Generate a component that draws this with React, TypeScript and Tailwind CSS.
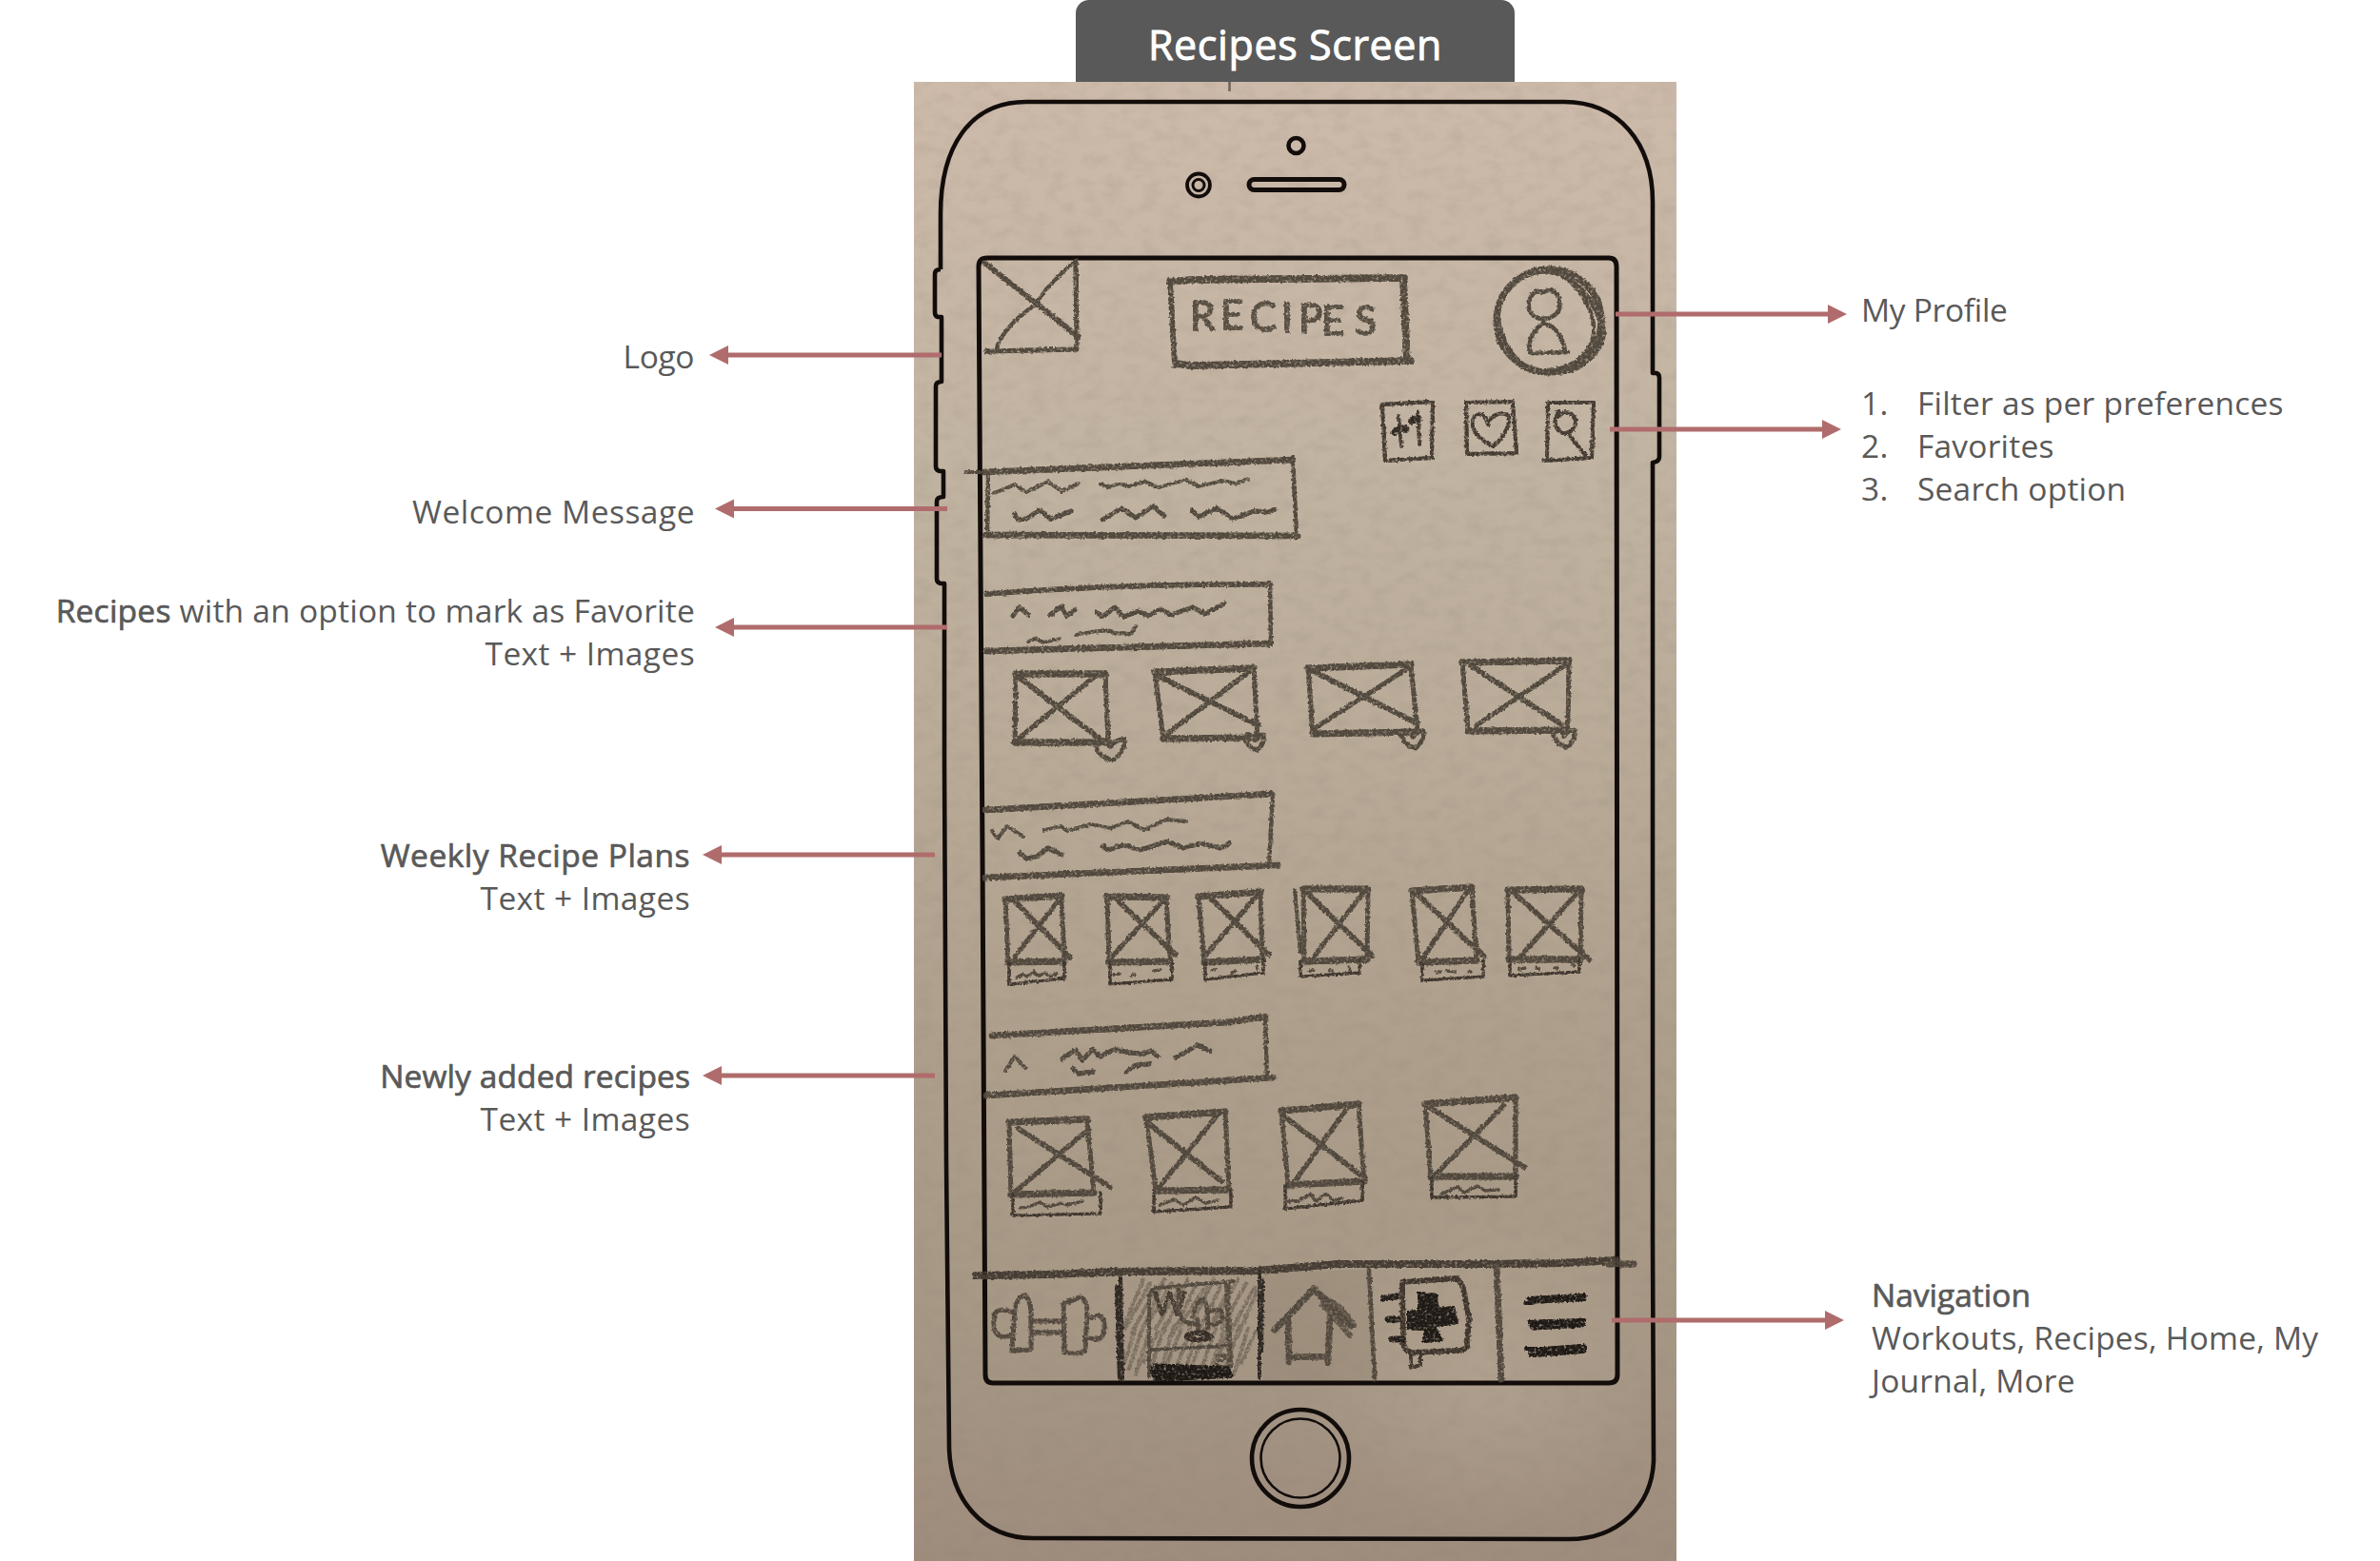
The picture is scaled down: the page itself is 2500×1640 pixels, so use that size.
import { ReactNode } from "react";

type Point = [number, number];

// corners run top-left, top-right, bottom-right, bottom-left, then the two diagonals
type Thumb = { box: number[]; cross: number[]; caption?: number[]; note?: string; heart?: number[] };

const favorites: Thumb[] = [
  { box: [1067, 708, 1161, 708, 1164, 780, 1066, 780], cross: [1071, 712, 1159, 779, 1152, 709, 1071, 775], heart: [1166, 776, 17, 25] },
  { box: [1213, 706, 1317, 702, 1321, 775, 1222, 776], cross: [1218, 711, 1322, 762, 1312, 706, 1227, 770], heart: [1318, 771, 11, 19] },
  { box: [1374, 702, 1482, 698, 1489, 769, 1379, 771], cross: [1377, 704, 1489, 760, 1479, 702, 1381, 765], heart: [1484, 767, 13, 21] },
  { box: [1536, 696, 1648, 694, 1647, 767, 1542, 768], cross: [1546, 700, 1640, 761, 1644, 699, 1551, 762], heart: [1643, 766, 13, 21] },
];

const weekly: Thumb[] = [
  { box: [1056, 945, 1115, 941, 1118, 1010, 1059, 1011], cross: [1067, 948, 1124, 1006, 1112, 946, 1066, 1005], caption: [1060, 1034, 1118, 1028], note: "M1068 1027L1074 1024L1079 1026L1086 1021L1091 1026L1097 1022L1103 1026L1110 1023" },
  { box: [1163, 942, 1225, 943, 1229, 1010, 1165, 1011], cross: [1175, 947, 1235, 1003, 1222, 946, 1167, 1006], caption: [1166, 1034, 1231, 1029], note: "M1170 1024L1176 1023M1189 1025L1192 1024M1212 1020L1218 1019" },
  { box: [1259, 942, 1324, 937, 1326, 1008, 1265, 1011], cross: [1271, 943, 1333, 1003, 1320, 941, 1266, 1004], caption: [1266, 1029, 1327, 1022], note: "M1273 1020L1276 1019M1294 1022L1297 1020M1320 1016L1321 1018" },
  { box: [1369, 934, 1437, 934, 1436, 1008, 1370, 1010], cross: [1372, 937, 1441, 1004, 1432, 938, 1380, 1005], caption: [1366, 1026, 1428, 1022], note: "M1376 1020L1379 1019M1397 1019L1400 1020M1417 1016L1418 1019" },
  { box: [1483, 936, 1546, 932, 1551, 1009, 1490, 1011], cross: [1487, 938, 1559, 1005, 1541, 937, 1493, 1009], caption: [1494, 1030, 1558, 1026], note: "M1509 1021L1513 1021M1520 1020L1528 1021M1543 1021L1545 1021" },
  { box: [1584, 935, 1661, 934, 1660, 1008, 1585, 1008], cross: [1590, 938, 1669, 1008, 1656, 939, 1596, 1006], caption: [1586, 1025, 1659, 1021], note: "M1596 1018L1602 1017M1614 1017L1617 1018M1633 1017L1636 1017M1652 1014L1654 1015" },
];

const newest: Thumb[] = [
  { box: [1060, 1179, 1142, 1176, 1149, 1253, 1062, 1255], cross: [1070, 1186, 1166, 1247, 1143, 1187, 1065, 1253], caption: [1064, 1277, 1156, 1275], note: "M1072 1269L1081 1268L1092 1263L1100 1268L1115 1264L1121 1266L1137 1262" },
  { box: [1204, 1174, 1287, 1168, 1291, 1250, 1214, 1251], cross: [1205, 1179, 1283, 1241, 1280, 1170, 1217, 1248], caption: [1212, 1273, 1293, 1268], note: "M1219 1266L1233 1260L1243 1266L1256 1258L1266 1264L1279 1261" },
  { box: [1346, 1167, 1427, 1160, 1433, 1241, 1353, 1245], cross: [1349, 1173, 1434, 1238, 1416, 1163, 1358, 1244], caption: [1350, 1270, 1431, 1261], note: "M1353 1262L1363 1262L1377 1255L1382 1262L1393 1254L1400 1261L1409 1259" },
  { box: [1497, 1160, 1592, 1153, 1592, 1236, 1503, 1236], cross: [1501, 1163, 1601, 1226, 1579, 1162, 1507, 1235], caption: [1504, 1258, 1592, 1257], note: "M1513 1255L1531 1247L1538 1253L1552 1246L1560 1251L1574 1250" },
];

const squiggles: Point[][] = [
  [[1044, 518], [1052, 515], [1066, 509], [1078, 517], [1101, 506], [1115, 516], [1133, 508]],
  [[1156, 508], [1164, 512], [1175, 508], [1185, 511], [1203, 506], [1217, 512], [1246, 504], [1259, 511], [1285, 505], [1298, 508], [1311, 503]],
  [[1080, 674], [1087, 671], [1096, 675], [1113, 671]],
  [[1130, 667], [1146, 664], [1164, 662], [1170, 665], [1188, 666], [1193, 658]],
  [[1042, 873], [1048, 881], [1058, 868], [1075, 879]],
  [[1097, 872], [1115, 868], [1120, 873], [1146, 866], [1167, 870], [1185, 863], [1202, 872], [1225, 861], [1246, 863]],
  [[1056, 1125], [1066, 1110], [1077, 1122]],
];

const darkSquiggles: Point[][] = [
  [[1066, 540], [1069, 546], [1078, 545], [1092, 536], [1104, 545], [1125, 537]],
  [[1158, 546], [1178, 534], [1193, 544], [1211, 532], [1223, 542]],
  [[1252, 536], [1259, 543], [1278, 534], [1295, 545], [1318, 537], [1332, 538], [1339, 535]],
  [[1064, 647], [1071, 638], [1080, 646]],
  [[1103, 646], [1115, 637], [1120, 647], [1129, 641]],
  [[1152, 643], [1158, 648], [1171, 638], [1180, 648], [1196, 642], [1206, 647], [1219, 640], [1230, 646], [1253, 638], [1266, 645], [1286, 634]],
  [[1071, 896], [1078, 902], [1089, 900], [1101, 891], [1115, 898]],
  [[1158, 889], [1164, 893], [1180, 888], [1198, 893], [1226, 884], [1243, 891], [1262, 886], [1282, 891], [1291, 886]],
  [[1116, 1112], [1130, 1103], [1137, 1114], [1148, 1102], [1155, 1110], [1172, 1102], [1185, 1106], [1201, 1107], [1209, 1104], [1216, 1110]],
  [[1235, 1111], [1258, 1098], [1271, 1104]],
  [[1127, 1123], [1133, 1128], [1148, 1126]],
  [[1183, 1126], [1194, 1119], [1207, 1118]],
];

const arrows = [
  { tail: 989, head: 745, y: 373 },
  { tail: 995, head: 751, y: 534.5 },
  { tail: 995, head: 751, y: 659 },
  { tail: 982, head: 738, y: 898 },
  { tail: 982, head: 738, y: 1130 },
  { tail: 1697, head: 1940, y: 330 },
  { tail: 1691, head: 1934, y: 451 },
  { tail: 1693, head: 1937, y: 1387 },
];

const hatching = [1189, 1196, 1203, 1211, 1219, 1228, 1236, 1245, 1254, 1263, 1272, 1280, 1288, 1297, 1306, 1314];

function wave(points: Point[]) {
  return points.map(([x, y], i) => `${i ? "L" : "M"}${x} ${y}`).join("");
}

function SketchThumb({ box, cross, caption, note, heart }: Thumb) {
  const [ax, ay, bx, by, cx, cy, dx, dy] = box;
  return (
    <g>
      <path d={`M${ax} ${ay}L${bx} ${by}M${dx} ${dy}L${cx} ${cy}`} strokeWidth="7" />
      <path d={`M${ax} ${ay}L${dx} ${dy}M${bx} ${by}L${cx} ${cy}`} strokeWidth="4.8" />
      <path d={`M${cross[0]} ${cross[1]}L${cross[2]} ${cross[3]}`} strokeWidth="5.5" />
      <path d={`M${cross[4]} ${cross[5]}L${cross[6]} ${cross[7]}`} strokeWidth="5" />
      {caption && <path d={`M${caption[0]} ${dy}L${caption[0]} ${caption[1]}L${caption[2]} ${caption[3]}L${caption[2]} ${cy}`} stroke="#3e352d" strokeWidth="3.2" />}
      {note && <path d={note} strokeWidth="3.2" />}
      {heart && <SketchHeart x={heart[0]} y={heart[1]} half={heart[2]} height={heart[3]} />}
    </g>
  );
}

function SketchHeart({ x, y, half, height }: { x: number; y: number; half: number; height: number }) {
  return (
    <path
      d={`M${x} ${y + height * 0.35}C${x - half * 0.4} ${y - 3} ${x - half} ${y} ${x - half + 2} ${y + height * 0.35}Q${x - half * 0.6} ${y + height * 0.8} ${x + 3} ${y + height - 2}Q${x + half} ${y + height * 0.5} ${x + half - 2} ${y + 1}Q${x + half * 0.4} ${y} ${x} ${y + height * 0.35}`}
      strokeWidth="4.6"
    />
  );
}

function PhoneOutline() {
  return (
    <g fill="none" stroke="#120d0b" strokeWidth="4.6" strokeLinejoin="round">
      <path d="M988 283V225C988 155 1018 107 1078 107H1643C1700 107 1736 150 1736 212V392H1740Q1743 393 1743 397V480Q1743 485 1736 486V1300L1737 1535C1735 1582 1700 1617 1648 1617L1085 1616C1032 1616 998 1575 997 1520L994 1220L992 800V613H988Q984 612 984 608V527Q984 522 991 522V495H987Q983 494 983 490V406Q983 401 989 401V333H985Q982 332 982 328V288Q982 283 988 283" />
      <path d="M1037 271H1690Q1698 271 1698 280L1699 1444Q1699 1453 1690 1453H1043Q1035 1453 1035 1444L1032 900L1028 280Q1028 271 1037 271Z" strokeWidth="5" />
      <circle cx="1361.5" cy="153" r="8" />
      <circle cx="1259" cy="194.5" r="12" strokeWidth="3.8" />
      <circle cx="1259" cy="194.5" r="6" strokeWidth="3" />
      <rect x="1312" y="188.5" width="100" height="11" rx="5.5" strokeWidth="5" />
      <circle cx="1366" cy="1532" r="51" />
      <circle cx="1366" cy="1532" r="41.5" strokeWidth="2.6" />
      <path d="M1291.5 86V96" stroke="#6d6056" strokeWidth="2.5" />
    </g>
  );
}

function HeaderSketch() {
  return (
    <g>
      <path d="M1034 276L1133 354" strokeWidth="5.5" />
      <path d="M1130 274Q1098 301 1088 320Q1056 341 1047 365" strokeWidth="4" />
      <path d="M1130 274L1131 367L1036 369" strokeWidth="5" />
      <path d="M1229 296L1252 294L1475 292M1235 382L1250 384L1482 379" strokeWidth="7.5" />
      <path d="M1229 296L1234 384" strokeWidth="5.5" />
      <path d="M1474 293L1478 380" strokeWidth="7.5" />
      <text
        x="1250 1282 1313 1346 1364 1388 1423"
        y="347 346 348 349 350 352 352"
        fill="#574e42"
        stroke="#574e42"
        strokeWidth="1.4"
        className="font-['Lato',sans-serif] text-[42px]"
      >
        RECIPES
      </text>
      <ellipse cx="1627" cy="337" rx="55" ry="54" strokeWidth="7" />
      <path d="M1600 291C1640 270 1676 310 1685 350C1680 374 1658 392 1634 391" strokeWidth="5" />
      <path d="M1632 284C1663 300 1676 332 1674 350C1670 374 1650 389 1620 389" strokeWidth="4" />
      <path d="M1575 322C1571 349 1590 382 1612 388" strokeWidth="3" />
      <path d="M1622 307C1609 303 1605 315 1606 324C1610 339 1632 338 1638 325C1641 306 1628 302 1622 307Z" strokeWidth="4.4" />
      <path d="M1622 339C1611 345 1606 358 1606 367Q1607 372 1613 371L1647 370M1622 339C1635 344 1642 354 1644 369" strokeWidth="4.4" />
    </g>
  );
}

function ToolbarSketch() {
  return (
    <g stroke="#443b32" strokeWidth="4">
      <path d="M1451 425L1505 422L1504 481L1455 484L1452 425" />
      <path d="M1469 437L1472 469M1489 433L1491 467" strokeWidth="3.6" />
      <path d="M1465 454Q1473 448 1477 451M1483 442Q1488 438 1490 441" strokeWidth="7" stroke="#322a23" />
      <path d="M1540 423L1589 422L1593 476L1541 477Z" />
      <path d="M1563 446C1560 431 1545 432 1547 448C1550 458 1558 464 1569 469C1578 460 1587 449 1585 437C1576 431 1565 437 1563 446" />
      <path d="M1625 480L1626 423L1674 423L1672 481L1621 484" />
      <path d="M1637 432C1630 443 1635 456 1645 455C1658 453 1659 435 1645 433Q1640 433 1636 438M1647 455L1665 478" />
    </g>
  );
}

function SectionHeadings() {
  return (
    <g>
      <path d="M1034 496L1358 483M1036 562L1363 563M1036 684L1335 676M1035 851L1336 834M1035 922L1342 909M1042 1088L1290 1074L1329 1068M1036 1151L1338 1132" strokeWidth="6.5" />
      <path d="M1036 624Q1180 613 1334 614" strokeWidth="5.5" />
      <path d="M1015 496H1060M1038 497L1037 562M1358 480L1362 563M1334 612L1335 678M1337 834L1333 909M1329 1067L1331 1133" strokeWidth="4.2" />
      <g strokeWidth="3.8" opacity="0.85">
        {squiggles.map((points, i) => <path key={i} d={wave(points)} />)}
      </g>
      <g strokeWidth="4.8">
        {darkSquiggles.map((points, i) => <path key={i} d={wave(points)} />)}
      </g>
    </g>
  );
}

function NavSketch() {
  return (
    <g>
      <path d="M1025 1340L1100 1339L1175 1336L1321 1335L1405 1328L1572 1328L1640 1327L1698 1324" strokeWidth="8" stroke="#453c33" />
      <path d="M1690 1328H1716" strokeWidth="7" />
      <path d="M1177 1342L1179 1450M1173 1352L1176 1448" strokeWidth="4" stroke="#2e2823" />
      <path d="M1323 1336L1323 1448M1326 1346L1325 1420" strokeWidth="4" stroke="#2e2823" />
      <path d="M1438 1334L1444 1449" strokeWidth="4.4" />
      <path d="M1572 1330L1577 1449" strokeWidth="6.5" />

      {/* dumbbell */}
      <g strokeWidth="4.8" opacity="0.9">
        <path d="M1064 1379Q1044 1371 1044 1386V1394Q1046 1408 1063 1403" />
        <path d="M1066 1375Q1070 1361 1076 1361Q1082 1364 1083 1378V1418L1063 1419Z" />
        <path d="M1084 1388H1117M1084 1400H1117" />
        <path d="M1117 1370L1134 1363Q1142 1364 1142 1380L1140 1418Q1135 1424 1118 1421Z" />
        <path d="M1143 1385L1154 1382Q1160 1385 1160 1392Q1160 1408 1151 1407L1140 1405" />
      </g>

      {/* recipe book, shaded as the selected tab */}
      <g strokeWidth="4" opacity="0.3">
        {hatching.map((x, i) => (
          <path key={x} d={`M${x + 12} ${1344 + (i % 3) * 4}L${Math.max(x - 14, 1181)} ${1392 + (i % 4) * 4}M${x + 5} ${1390 + (i % 4) * 3}L${Math.max(x - 10, 1181)} ${1432 + (i % 3) * 6}`} />
        ))}
      </g>
      <path d="M1207 1446V1364Q1207 1352 1218 1353L1296 1346M1208 1418L1292 1414" strokeWidth="3.6" />
      <path d="M1289 1349L1292 1435" strokeWidth="6" opacity="0.8" />
      <text x="1211" y="1382" fill="#443b32" stroke="#443b32" className="font-['Lato',sans-serif] text-[34px]">W</text>
      <path d="M1238 1353V1376Q1241 1392 1257 1391M1253 1383Q1257 1364 1265 1365Q1270 1375 1268 1398M1258 1386V1397M1268 1379Q1284 1372 1284 1383Q1283 1393 1270 1391" strokeWidth="4.4" />
      <ellipse cx="1259" cy="1404" rx="13" ry="3.5" strokeWidth="4.5" stroke="#352c25" />
      <path d="M1278 1424L1287 1424Q1288 1430 1279 1430Q1275 1435 1286 1436" strokeWidth="3" />
      <path d="M1209 1440L1213 1434L1290 1437L1294 1446L1214 1450Z" fill="#1d1814" stroke="#1d1814" strokeWidth="3" />

      {/* home arrow */}
      <path d="M1339 1397Q1362 1374 1380 1354Q1400 1375 1419 1393" strokeWidth="7" opacity="0.9" />
      <path d="M1383 1358L1407 1373L1422 1392M1389 1370L1418 1403" strokeWidth="6" opacity="0.65" />
      <path d="M1353 1388L1354 1431M1397 1384L1395 1432M1354 1426L1394 1425" strokeWidth="6.5" opacity="0.9" />

      {/* journal */}
      <g stroke="#3e352d">
        <path d="M1473 1347L1528 1343Q1536 1344 1539 1363L1543 1385L1541 1415Q1536 1420 1528 1419L1485 1421Q1476 1421 1474 1412Z" strokeWidth="5.5" />
        <path d="M1482 1423V1437L1492 1434V1424" strokeWidth="3.5" />
      </g>
      <path d="M1453 1364L1467 1362M1458 1386H1469M1462 1407H1473" strokeWidth="6.5" stroke="#241e1a" />
      <path d="M1490 1358L1509 1360L1510 1375L1527 1373L1531 1390L1507 1393L1515 1408L1495 1410L1497 1397L1479 1396V1378L1490 1377Z" fill="#1e1915" stroke="#1e1915" strokeWidth="2" />

      {/* more */}
      <g stroke="#1e1915">
        <path d="M1607 1366L1663 1363" strokeWidth="8" />
        <path d="M1611 1393L1661 1390" strokeWidth="9" />
        <path d="M1610 1421L1662 1417" strokeWidth="10" />
        <path d="M1602 1369H1610M1606 1389L1664 1387M1603 1417H1663" strokeWidth="4" />
      </g>
    </g>
  );
}

function PaperSketch() {
  return (
    <svg viewBox="960 86 801 1554" className="block h-[1554px] w-[801px]">
      <defs>
        <linearGradient id="paper" x1="0" y1="0" x2="0" y2="1">
          <stop offset="0" stopColor="#cdbaaa" />
          <stop offset="0.25" stopColor="#c2b4a2" />
          <stop offset="0.45" stopColor="#b9ab98" />
          <stop offset="0.65" stopColor="#ae9f8c" />
          <stop offset="0.85" stopColor="#a69785" />
          <stop offset="1" stopColor="#9e8c7d" />
        </linearGradient>
        <radialGradient id="glow">
          <stop offset="0" stopColor="#b9a997" stopOpacity="0.55" />
          <stop offset="1" stopColor="#b9a997" stopOpacity="0" />
        </radialGradient>
        <filter id="grain" x="0" y="0" width="100%" height="100%">
          <feTurbulence type="fractalNoise" baseFrequency="0.05 0.08" numOctaves="5" seed="4" />
          <feColorMatrix values="0 0 0 0 0.25  0 0 0 0 0.2  0 0 0 0 0.15  0.3 0 0 0 -0.12" />
        </filter>
        <filter id="pencil" filterUnits="userSpaceOnUse" x="960" y="86" width="802" height="1554" colorInterpolationFilters="sRGB">
          <feTurbulence type="fractalNoise" baseFrequency="0.35" numOctaves="2" seed="8" result="noise" />
          <feDisplacementMap in="SourceGraphic" in2="noise" scale="3.5" xChannelSelector="R" yChannelSelector="G" result="rough" />
          <feColorMatrix in="noise" values="0 0 0 0 0  0 0 0 0 0  0 0 0 0 0  0 0 2.2 0 -0.3" result="tooth" />
          <feComposite in="rough" in2="tooth" operator="in" result="worn" />
          <feMerge result="layered">
            <feMergeNode in="worn" />
            <feMergeNode in="worn" />
          </feMerge>
          <feGaussianBlur in="layered" stdDeviation="0.6" />
        </filter>
      </defs>
      <rect x="960" y="86" width="801" height="1554" fill="url(#paper)" />
      <ellipse cx="1560" cy="1440" rx="190" ry="170" fill="url(#glow)" />
      <path d="M1326 1337L1440 1334L1444 1450L1326 1450Z" fill="#6b5d50" opacity="0.13" />
      <rect x="960" y="86" width="801" height="1554" filter="url(#grain)" />
      <PhoneOutline />
      <g filter="url(#pencil)" fill="none" stroke="#51483d" strokeLinecap="round" strokeLinejoin="round">
        <HeaderSketch />
        <ToolbarSketch />
        <SectionHeadings />
        {[...favorites, ...weekly, ...newest].map((thumb) => <SketchThumb key={thumb.box.join()} {...thumb} />)}
        <path d="M1360 935L1366 1000" strokeWidth="4" />
        <NavSketch />
      </g>
    </svg>
  );
}

function Callouts() {
  return (
    <svg viewBox="0 0 2500 1640" className="pointer-events-none absolute inset-0 h-full w-full">
      {arrows.map(({ tail, head, y }) => {
        const base = head > tail ? head - 20 : head + 20;
        return (
          <g key={y}>
            <path d={`M${tail} ${y}H${base}`} stroke="#b06c6c" strokeWidth="5" />
            <path d={`M${head} ${y}L${base} ${y - 10}V${y + 10}Z`} fill="#b06c6c" />
          </g>
        );
      })}
    </svg>
  );
}

function Strong({ children }: { children: ReactNode }) {
  return <span className="[-webkit-text-stroke:0.7px_#595959]">{children}</span>;
}

export default function App() {
  return (
    <main className="relative flex h-[1640px] w-[2500px] overflow-hidden bg-white font-['Open_Sans',sans-serif] text-[33.5px] leading-[45px] text-[#595959]">
      <section className="flex w-[960px] flex-col items-end pt-[352px] text-right whitespace-nowrap">
        <p className="mr-[231px] tracking-[-0.4px]">Logo</p>
        <p className="mt-[118px] mr-[230px] tracking-[0.5px]">Welcome Message</p>
        <div className="mt-[59px] mr-[230px]">
          <p className="tracking-[0.24px]"><Strong>Recipes</Strong> with an option to mark as Favorite</p>
          <p className="tracking-[0.4px]">Text + Images</p>
        </div>
        <div className="mt-[167px] mr-[235px]">
          <p className="tracking-[0.5px]"><Strong>Weekly Recipe Plans</Strong></p>
          <p className="tracking-[0.4px]">Text + Images</p>
        </div>
        <div className="mt-[142px] mr-[235px]">
          <p className="tracking-[0.1px]"><Strong>Newly added recipes</Strong></p>
          <p className="tracking-[0.4px]">Text + Images</p>
        </div>
      </section>

      <section className="flex w-[801px] flex-col items-center">
        <h1 className="flex h-[86px] w-[461px] items-center justify-center rounded-t-[14px] bg-[#595959] pt-1.5 text-[43px] font-medium tracking-[0.6px] text-white [-webkit-text-stroke:0.9px_white]">
          Recipes Screen
        </h1>
        <PaperSketch />
      </section>

      <section className="flex flex-1 flex-col pt-[303px] pl-[194px] whitespace-nowrap">
        <p className="tracking-[-0.3px]">My Profile</p>
        <ol className="mt-[53px] tracking-[0.22px]">
          {["Filter as per preferences", "Favorites", "Search option"].map((option, i) => (
            <li key={option} className="flex">
              <span className="w-[59px]">{i + 1}.</span>
              {option}
            </li>
          ))}
        </ol>
        <div className="mt-[802px] pl-[11px] tracking-[0.2px]">
          <p className="tracking-normal"><Strong>Navigation</Strong></p>
          <p>Workouts, Recipes, Home, My</p>
          <p>Journal, More</p>
        </div>
      </section>
      <Callouts />
    </main>
  );
}
